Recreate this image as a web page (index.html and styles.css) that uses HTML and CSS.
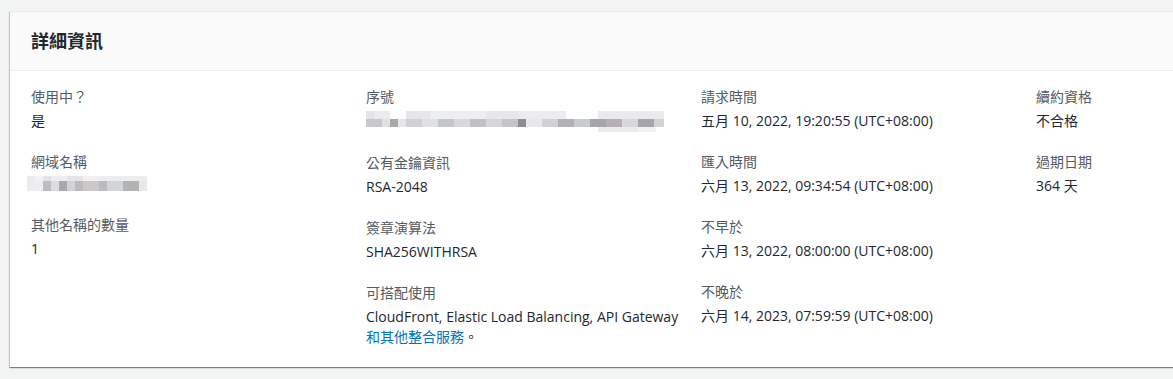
FILE: index.html
```html
<!DOCTYPE html>
<html lang="zh-Hant">
<head>
    <meta charset="UTF-8">
    <meta name="viewport" content="width=device-width, initial-scale=1.0">
    <title>詳細資訊</title>
    <link rel="stylesheet" href="styles.css">
</head>
<body>

    <div class="panel">
        <div class="panel-header">
            <h2>詳細資訊</h2>
        </div>

        <div class="panel-body">
            <!-- Column 1 -->
            <div class="column">
                <div class="field">
                    <div class="label">使用中？</div>
                    <div class="value">是</div>
                </div>
                <div class="field">
                    <div class="label">網域名稱</div>
                    <div class="value"><span class="masked masked-domain"></span></div>
                </div>
                <div class="field">
                    <div class="label">其他名稱的數量</div>
                    <div class="value">1</div>
                </div>
            </div>

            <!-- Column 2 -->
            <div class="column">
                <div class="field">
                    <div class="label">序號</div>
                    <div class="value"><span class="masked masked-serial"></span></div>
                </div>
                <div class="field">
                    <div class="label">公有金鑰資訊</div>
                    <div class="value">RSA-2048</div>
                </div>
                <div class="field">
                    <div class="label">簽章演算法</div>
                    <div class="value">SHA256WITHRSA</div>
                </div>
                <div class="field">
                    <div class="label">可搭配使用</div>
                    <div class="value">CloudFront, Elastic Load Balancing, API Gateway<br><a href="#">和其他整合服務</a>。</div>
                </div>
            </div>

            <!-- Column 3 -->
            <div class="column">
                <div class="field">
                    <div class="label">請求時間</div>
                    <div class="value">五月 10, 2022, 19:20:55 (UTC+08:00)</div>
                </div>
                <div class="field">
                    <div class="label">匯入時間</div>
                    <div class="value">六月 13, 2022, 09:34:54 (UTC+08:00)</div>
                </div>
                <div class="field">
                    <div class="label">不早於</div>
                    <div class="value">六月 13, 2022, 08:00:00 (UTC+08:00)</div>
                </div>
                <div class="field">
                    <div class="label">不晚於</div>
                    <div class="value">六月 14, 2023, 07:59:59 (UTC+08:00)</div>
                </div>
            </div>

            <!-- Column 4 -->
            <div class="column">
                <div class="field">
                    <div class="label">續約資格</div>
                    <div class="value">不合格</div>
                </div>
                <div class="field">
                    <div class="label">過期日期</div>
                    <div class="value">364 天</div>
                </div>
            </div>
        </div>
    </div>

</body>
</html>
```

FILE: styles.css
```css
html, body {
    overflow: hidden;
}
body {
    font-family: "Open Sans", "Noto Sans CJK TC", sans-serif;
    font-size: 14px;
    color: #16191f;
    background-color: #f2f3f3;
    margin: 0;
    padding: 11px 0 12px 10px;
}
.panel {
    width: 1400px;
    background-color: white;
    border-top: 1px solid #eaeded;
    box-shadow: 0 1px 1px 0 rgba(0, 28, 36, 0.45), -1px 1px 1px 0 rgba(0, 28, 36, 0.15);
}
.panel-header {
    background-color: #fafafa;
    border-bottom: 1px solid #eaeded;
    height: 58px;
    display: flex;
    align-items: center;
    padding: 0 21px;
}
.panel-header h2 {
    margin: 0;
    font-size: 18px;
    font-weight: 700;
    line-height: 22px;
    color: #232730;
}
.panel-body {
    display: grid;
    grid-template-columns: repeat(4, 335px);
    align-items: start;
    padding: 16px 21px 20px;
}
.column {
    display: flex;
    flex-direction: column;
    gap: 21px;
}
.field {
    line-height: 20px;
}
.label {
    color: #545b64;
    margin-bottom: 4px;
}
.value {
    color: #232730;
}
.value a {
    color: #0073bb;
    text-decoration: none;
}
.masked {
    display: block;
}
.masked-serial {
    width: 298px;
    height: 21px;
    margin-bottom: 0;
    background:
        linear-gradient(90deg, #e4e4e6 0 8px, #ececee 8px 24px, transparent 24px 40px, #e6e6e8 40px 64px, #eeeef0 64px 120px, #e8e6e8 120px 152px, #ecebed 152px 200px, transparent 200px 232px, #eaeaec 232px 298px) top / 100% 8px no-repeat,
        linear-gradient(90deg, #c8c7ca 0 16px, #e2e2e4 16px 24px, #a9a8ab 24px 32px, #e6e6e8 32px 40px, #cfd2d4 40px 56px, #dfe1e2 56px 72px, #c3c7ca 72px 88px, #d8d9db 88px 104px, #c1c0c3 104px 120px, #d4d6d8 120px 136px, #c5c4c7 136px 152px, #8f8e91 152px 160px, #e8e8ea 160px 176px, #d1d1d3 176px 192px, #b4b0b5 192px 208px, #c9cccf 208px 224px, #a7a5a9 224px 240px, #b6b0b4 240px 256px, #d6d8da 256px 272px, #a6a6a8 272px 288px, #d3d3d5 288px 298px) 0 8px / 100% 8px no-repeat,
        linear-gradient(90deg, transparent 0 232px, #ececee 232px 272px, #f2f2f3 272px 290px, transparent 290px) bottom / 100% 5px no-repeat;
}
.masked-domain {
    width: 120px;
    height: 15px;
    margin: 3px 0 3px -4px;
    background:
        linear-gradient(90deg, #ebebed 0 8px, #f2f2f3 8px 16px, #e4e4e6 16px 24px, #eeeef0 24px 40px, #e6e4e6 40px 56px, #f0f0f1 56px 72px, #ededef 72px 120px) top / 100% 5px no-repeat,
        linear-gradient(90deg, #ededef 0 16px, #bdbcbf 16px 24px, #dcdde0 24px 32px, #aea8ab 32px 40px, #d2d3d5 40px 48px, #b9bbbd 48px 56px, #cac6c9 56px 72px, #b8bcbd 72px 80px, #d2d5d6 80px 96px, #b3b3b4 96px 112px, #e8e8ea 112px 120px) 0 5px / 100% 10px no-repeat;
}
```
